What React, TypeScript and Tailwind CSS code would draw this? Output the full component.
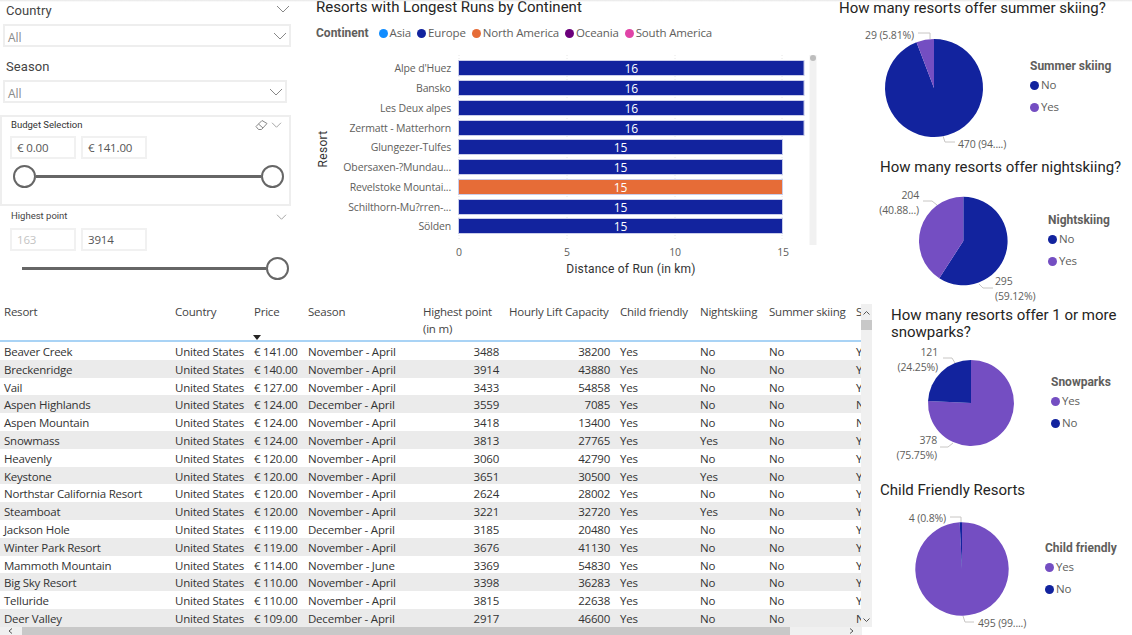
const din = "font-['Roboto',sans-serif]";

const navy = "#12239E";
const purple = "#744EC2";

const resorts = [
  ["Beaver Creek", "€ 141.00", "November - April", 3488, 38200, "No", "No", "Yes"],
  ["Breckenridge", "€ 140.00", "November - April", 3914, 43880, "No", "No", "Yes"],
  ["Vail", "€ 127.00", "November - April", 3433, 54858, "No", "No", "Yes"],
  ["Aspen Highlands", "€ 124.00", "December - April", 3559, 7085, "No", "No", "No"],
  ["Aspen Mountain", "€ 124.00", "November - April", 3418, 13400, "No", "No", "No"],
  ["Snowmass", "€ 124.00", "November - April", 3813, 27765, "Yes", "No", "Yes"],
  ["Heavenly", "€ 120.00", "November - April", 3060, 42790, "No", "No", "Yes"],
  ["Keystone", "€ 120.00", "November - April", 3651, 30500, "Yes", "No", "Yes"],
  ["Northstar California Resort", "€ 120.00", "November - April", 2624, 28002, "No", "No", "Yes"],
  ["Steamboat", "€ 120.00", "November - April", 3221, 32720, "Yes", "No", "Yes"],
  ["Jackson Hole", "€ 119.00", "December - April", 3185, 20480, "No", "No", "Yes"],
  ["Winter Park Resort", "€ 119.00", "November - April", 3676, 41130, "No", "No", "Yes"],
  ["Mammoth Mountain", "€ 114.00", "November - June", 3369, 54830, "No", "No", "Yes"],
  ["Big Sky Resort", "€ 110.00", "November - April", 3398, 36283, "No", "No", "Yes"],
  ["Telluride", "€ 110.00", "November - April", 3815, 22638, "No", "No", "Yes"],
  ["Deer Valley", "€ 109.00", "December - April", 2917, 46600, "No", "No", "No"],
];

const bars = [
  ["Alpe d'Huez", 16, navy, 68],
  ["Bansko", 16, navy, 88],
  ["Les Deux alpes", 16, navy, 108],
  ["Zermatt - Matterhorn", 16, navy, 128],
  ["Glungezer-Tulfes", 15, navy, 147],
  ["Obersaxen-?Mundau...", 15, navy, 167],
  ["Revelstoke Mountai...", 15, "#E66C37", 187],
  ["Schilthorn-Mu?rren-...", 15, navy, 207],
  ["Sölden", 15, navy, 226],
] as const;

const continents = [
  ["Asia", "#118DFF"],
  ["Europe", navy],
  ["North America", "#E66C37"],
  ["Oceania", "#6B007B"],
  ["South America", "#E044A7"],
];

const gridCols = "grid grid-cols-[171px_79px_54px_115px_85px_112px_80px_69px_87px_60px]";

function Chevron({ className = "" }: { className?: string }) {
  return (
    <svg width="14" height="8" viewBox="0 0 14 8" fill="none" stroke="#888" strokeWidth="1" className={className}>
      <polyline points="1,1 7,7 13,1" />
    </svg>
  );
}

function Dropdown({ label, boxClass }: { label: string; boxClass: string }) {
  return (
    <div className="flex h-[56px] flex-col">
      <div className="flex h-[24px] items-start justify-between pl-[3px]">
        <span className={`${din} text-[13px] leading-[22px] tracking-[0.1px] text-[#444]`}>{label}</span>
      </div>
      <div className={`flex h-[23px] items-center justify-between border-2 border-[#eeeeee] pl-[3px] pr-[2px] ${boxClass}`}>
        <span className="pt-[4px] text-[12px] text-[#8a8a8a]">All</span>
        <Chevron className="mt-[1px]" />
      </div>
    </div>
  );
}

function Input({ value, muted = false }: { value: string; muted?: boolean }) {
  return (
    <div className={`flex h-[23px] w-[66px] items-center border-2 border-[#f1f1f1] pl-[5px] text-[11.5px] tracking-[-0.15px] ${muted ? "text-[#c4c4c4]" : "text-[#555]"}`}>
      {value}
    </div>
  );
}

function Handle() {
  return <div className="h-[23px] w-[23px] shrink-0 rounded-full border-2 border-[#666] bg-white" />;
}

function Filters() {
  return (
    <div className="flex w-[291px] shrink-0 flex-col">
      <div className="relative pl-[3px]">
        <Dropdown label="Country" boxClass="w-[288px]" />
        <Chevron className="absolute right-[1px] top-[5px]" />
      </div>
      <div className="pl-[3px]">
        <Dropdown label="Season" boxClass="w-[284px]" />
      </div>
      <div className="mt-[3px] h-[91px] w-[291px] border-2 border-[#eeeeee] pl-[8px]">
        <div className="flex h-[16px] items-center justify-between pl-[1px] pr-[7px]">
          <span className={`${din} text-[9.5px] text-[#333]`}>Budget Selection</span>
          <div className="flex items-center gap-[3px]">
            <svg width="13" height="12" viewBox="0 0 13 12" fill="none" stroke="#888" strokeWidth="1">
              <path d="M1 7.5 7 1.5 12 4.5 6.5 10.5H3.5Z" />
              <path d="M3.5 5 8 9" />
            </svg>
            <Chevron className="h-[6px] w-[11px]" />
          </div>
        </div>
        <div className="flex gap-[5px] pt-[3px]">
          <Input value="€ 0.00" />
          <Input value="€ 141.00" />
        </div>
        <div className="flex items-center pl-[3px] pr-[5px] pt-[6px]">
          <Handle />
          <div className="h-[3px] flex-1 bg-[#666]" />
          <Handle />
        </div>
      </div>
      <div className="pl-[10px] pt-[1px]">
        <div className="flex h-[19px] items-center justify-between pl-[1px] pr-[4px]">
          <span className={`${din} text-[9.5px] text-[#444]`}>Highest point</span>
          <Chevron className="h-[6px] w-[11px]" />
        </div>
        <div className="flex gap-[5px] pt-[2px]">
          <Input value="163" muted />
          <Input value="3914" />
        </div>
        <div className="flex items-center pl-[12px] pr-[2px] pt-[6px]">
          <div className="h-[3px] flex-1 bg-[#666]" />
          <Handle />
        </div>
      </div>
    </div>
  );
}

function BarChart() {
  const x0 = 459;
  const perKm = (782 - 459) / 15;
  return (
    <div className="flex flex-1 flex-col">
      <h2 className={`${din} pl-[25px] text-[15px] leading-[15px] text-[#252423]`}>
        Resorts with Longest Runs by Continent
      </h2>
      <div className="flex h-[30px] items-center pl-[25px] pt-[6px] text-[11.5px] tracking-[-0.15px] text-[#605E5C]">
        <span className={`${din} mr-[10px] text-[12px] font-bold tracking-normal`}>Continent</span>
        {continents.map(([name, color]) => (
          <span key={name} className="mr-[6px] flex items-center gap-[2px]">
            <span className="h-[9px] w-[9px] rounded-full" style={{ backgroundColor: color }} />
            {name}
          </span>
        ))}
      </div>
      <svg width="581" height="240" viewBox="291 45 581 240" className="text-[10.5px] tracking-[-0.15px]">
        {[459, 567, 675, 782].map((x) => (
          <line key={x} x1={x} x2={x} y1="55" y2="240" stroke="#e6e6e6" strokeDasharray="1 2" />
        ))}
        {bars.map(([name, value, color, y]) => (
          <g key={name}>
            <text x="451" y={y + 4} textAnchor="end" fill="#605E5C">{name}</text>
            <rect x={x0 - 0.5} y={y - 7.5} width={value * perKm + 1} height="15" fill={color} stroke="#c9cdea" strokeWidth="1" />
            <text x={x0 + (value * perKm) / 2} y={y + 5} textAnchor="middle" fill="#fff" className="text-[12px]">{value}</text>
          </g>
        ))}
        {[["0", 459], ["5", 567], ["10", 675], ["15", 783]].map(([t, x]) => (
          <text key={t} x={x} y="256" textAnchor="middle" fill="#605E5C">{t}</text>
        ))}
        <text x="631" y="273" textAnchor="middle" fill="#333" className={`${din} text-[12px] tracking-[0.2px]`}>Distance of Run (in km)</text>
        <text transform="translate(327 149) rotate(-90)" textAnchor="middle" fill="#333" className={`${din} text-[12px] tracking-[0.3px]`}>Resort</text>
        <rect x="809.5" y="55" width="7" height="190" fill="#f1f1f1" />
        <circle cx="813" cy="58" r="3" fill="#bdbdbd" />
      </svg>
    </div>
  );
}

function ResortTable() {
  return (
    <div className="relative flex-1 overflow-hidden text-[11.5px] tracking-[-0.22px] text-[#333]">
      <div className="w-[861px] overflow-hidden">
        <div className={`${gridCols} h-[47px] w-[912px] border-b-2 border-[#a9d3f5] pt-[8px] leading-[17px] text-[#444]`}>
          <div className="pl-[4px]">Resort</div>
          <div className="pl-[4px]">Country</div>
          <div className="relative pl-[4px]">
            Price
            <svg width="8" height="5" viewBox="0 0 8 5" className="absolute left-[3px] top-[32px]">
              <path d="M0 0H8L4 5Z" fill="#252423" />
            </svg>
          </div>
          <div className="pl-[4px]">Season</div>
          <div className="pl-[4px]">Highest point<br />(in m)</div>
          <div className="whitespace-nowrap pl-[5px]">Hourly Lift Capacity</div>
          <div className="pl-[4px]">Child friendly</div>
          <div className="pl-[4px]">Nightskiing</div>
          <div className="pl-[4px]">Summer skiing</div>
          <div className="pl-[4px]">Snowparks</div>
        </div>
        {resorts.map((r, i) => (
          <div key={r[0]} className={`${gridCols} h-[17.8px] w-[912px] leading-[19.5px] ${i % 2 ? "bg-[#ebebeb]" : "bg-white"}`}>
            <div className="pl-[4px]">{r[0]}</div>
            <div className="pl-[4px]">United States</div>
            <div className="pl-[4px]">{r[1]}</div>
            <div className="pl-[4px]">{r[2]}</div>
            <div className="pr-[5px] text-right">{r[3]}</div>
            <div className="pr-[6px] text-right">{r[4]}</div>
            <div className="pl-[4px]">Yes</div>
            <div className="pl-[4px]">{r[5]}</div>
            <div className="pl-[4px]">{r[6]}</div>
            <div className="pl-[4px]">{r[7]}</div>
          </div>
        ))}
      </div>
      <div className="absolute bottom-[8px] right-0 top-[9px] flex w-[11px] flex-col items-center bg-[#f0f0f0] pt-[7px]">
        <svg width="7" height="4" viewBox="0 0 7 4" fill="none" stroke="#555"><polyline points="0.5,3.5 3.5,0.5 6.5,3.5" /></svg>
        <div className="mt-[5px] h-[10px] w-full bg-[#c8c8c8]" />
        <svg width="7" height="4" viewBox="0 0 7 4" fill="none" stroke="#555" className="mb-[5px] mt-auto"><polyline points="0.5,0.5 3.5,3.5 6.5,0.5" /></svg>
      </div>
      <div className="absolute bottom-0 left-0 flex h-[8px] w-[862px] items-center bg-[#f0f0f0]">
        <svg width="22" height="6" viewBox="0 0 22 6" fill="none" stroke="#555"><polyline points="12,0.5 9,3 12,5.5" /></svg>
        <div className="h-full w-[768px] bg-[#c8c8c8]" />
        <svg width="72" height="6" viewBox="0 0 72 6" fill="none" stroke="#555"><polyline points="60,0.5 63,3 60,5.5" /></svg>
      </div>
    </div>
  );
}

type Pie = {
  title: React.ReactNode;
  sectionClass: string;
  titleClass: string;
  bodyClass: string;
  legendClass: string;
  svgW: number;
  svgH: number;
  svgTop: number;
  cx: number;
  cy: number;
  r: number;
  slices: [string, number][];
  legendTitle: string;
  legend: [string, string][];
  leaders: string[];
  labels: [string, number, number, "start" | "end"][];
};

// page coordinates, the viewBox moves them into each panel
const pies: Pie[] = [
  {
    title: "How many resorts offer summer skiing?",
    sectionClass: "h-[159px]",
    titleClass: "ml-[-33px]",
    bodyClass: "h-[143px]",
    legendClass: "mt-[41px]",
    svgW: 158, svgH: 143, svgTop: 16,
    cx: 934, cy: 87, r: 49,
    slices: [[navy, 94.19], [purple, 5.81]],
    legendTitle: "Summer skiing",
    legend: [["No", navy], ["Yes", purple]],
    leaders: ["918,32 930,32 930,38", "943,135 945,141 955,141"],
    labels: [["29 (5.81%)", 914, 38, "end"], ["470 (94....)", 958, 147, "start"]],
  },
  {
    title: "How many resorts offer nightskiing?",
    sectionClass: "h-[145px]",
    titleClass: "ml-[8px]",
    bodyClass: "h-[129px]",
    legendClass: "mt-[36px]",
    svgW: 176, svgH: 129, svgTop: 175,
    cx: 963.3, cy: 240, r: 44.3,
    slices: [[navy, 59.12], [purple, 40.88]],
    legendTitle: "Nightskiing",
    legend: [["No", navy], ["Yes", purple]],
    leaders: ["923,200 932,200 937,204", "979,283 983,287 993,287"],
    labels: [["204", 919, 198, "end"], ["(40.88...)", 919, 213, "end"], ["295", 995, 284, "start"], ["(59.12%)", 995, 299, "start"]],
  },
  {
    title: <>How many resorts offer 1 or more<br />snowparks?</>,
    sectionClass: "h-[176px] pt-[3px]",
    titleClass: "ml-[19px]",
    bodyClass: "h-[139px]",
    legendClass: "mt-[33px]",
    svgW: 179, svgH: 139, svgTop: 341,
    cx: 971, cy: 403, r: 43,
    slices: [[purple, 75.75], [navy, 24.25]],
    legendTitle: "Snowparks",
    legend: [["Yes", purple], ["No", navy]],
    leaders: ["943,358 952,358 955,363", "940,447 948,447 953,443"],
    labels: [["121", 938, 356, "end"], ["(24.25%)", 938, 371, "end"], ["378", 937, 444, "end"], ["(75.75%)", 937, 459, "end"]],
  },
  {
    title: "Child Friendly Resorts",
    sectionClass: "h-[155px] pt-[2px]",
    titleClass: "ml-[8px]",
    bodyClass: "h-[137px]",
    legendClass: "mt-[41px]",
    svgW: 173, svgH: 137, svgTop: 498,
    cx: 962, cy: 568, r: 46.7,
    slices: [[purple, 99.2], [navy, 0.8]],
    legendTitle: "Child friendly",
    legend: [["Yes", purple], ["No", navy]],
    leaders: ["950,516 961,516 961,521", "963,615 965,621 974,621"],
    labels: [["4 (0.8%)", 946, 521, "end"], ["495 (99....)", 978, 626, "start"]],
  },
];

function slicePaths(p: Pie) {
  let start = 0;
  return p.slices.map(([color, pct]) => {
    const end = start + pct;
    const a0 = (start / 100) * Math.PI * 2;
    const a1 = (end / 100) * Math.PI * 2;
    const large = pct > 50 ? 1 : 0;
    const d = `M${p.cx} ${p.cy}L${p.cx + p.r * Math.sin(a0)} ${p.cy - p.r * Math.cos(a0)}A${p.r} ${p.r} 0 ${large} 1 ${p.cx + p.r * Math.sin(a1)} ${p.cy - p.r * Math.cos(a1)}Z`;
    start = end;
    return { color, d };
  });
}

function PiePanel({ pie }: { pie: Pie }) {
  return (
    <section className={pie.sectionClass}>
      <h3 className={`${din} ${pie.titleClass} whitespace-nowrap text-[15px] leading-[17px] text-[#252423]`}>{pie.title}</h3>
      <div className={`flex ${pie.bodyClass}`}>
        <svg width={pie.svgW} height={pie.svgH} viewBox={`872 ${pie.svgTop} ${pie.svgW} ${pie.svgH}`} className="shrink-0 overflow-visible text-[10.5px] tracking-[-0.15px]">
          {slicePaths(pie).map((s) => (
            <path key={s.color} d={s.d} fill={s.color} />
          ))}
          {pie.leaders.map((l) => (
            <polyline key={l} points={l} fill="none" stroke="#c8c6c4" />
          ))}
          {pie.labels.map(([text, x, y, anchor]) => (
            <text key={text} x={x} y={y} textAnchor={anchor} fill="#605E5C">{text}</text>
          ))}
        </svg>
        <div className={`${pie.legendClass} text-[11.5px] leading-[16px] tracking-[-0.15px] text-[#605E5C]`}>
          <div className={`${din} whitespace-nowrap text-[12px] font-bold tracking-normal`}>{pie.legendTitle}</div>
          {pie.legend.map(([name, color]) => (
            <div key={name} className="flex h-[22px] items-center gap-[2px]">
              <span className="h-[9px] w-[9px] rounded-full" style={{ backgroundColor: color }} />
              {name}
            </div>
          ))}
        </div>
      </div>
    </section>
  );
}

export default function App() {
  return (
    <div className="relative flex h-[635px] w-[1132px] overflow-hidden bg-white font-['Open_Sans',sans-serif]">
      <div className="absolute inset-x-0 top-0 h-[2px] bg-gradient-to-b from-[#e6e6e6] to-transparent" />
      <div className="flex w-[872px] shrink-0 flex-col">
        <div className="flex h-[295px] shrink-0">
          <Filters />
          <BarChart />
        </div>
        <ResortTable />
      </div>
      <div className="w-[260px] shrink-0">
        {pies.map((p) => (
          <PiePanel key={p.legendTitle} pie={p} />
        ))}
      </div>
    </div>
  );
}
